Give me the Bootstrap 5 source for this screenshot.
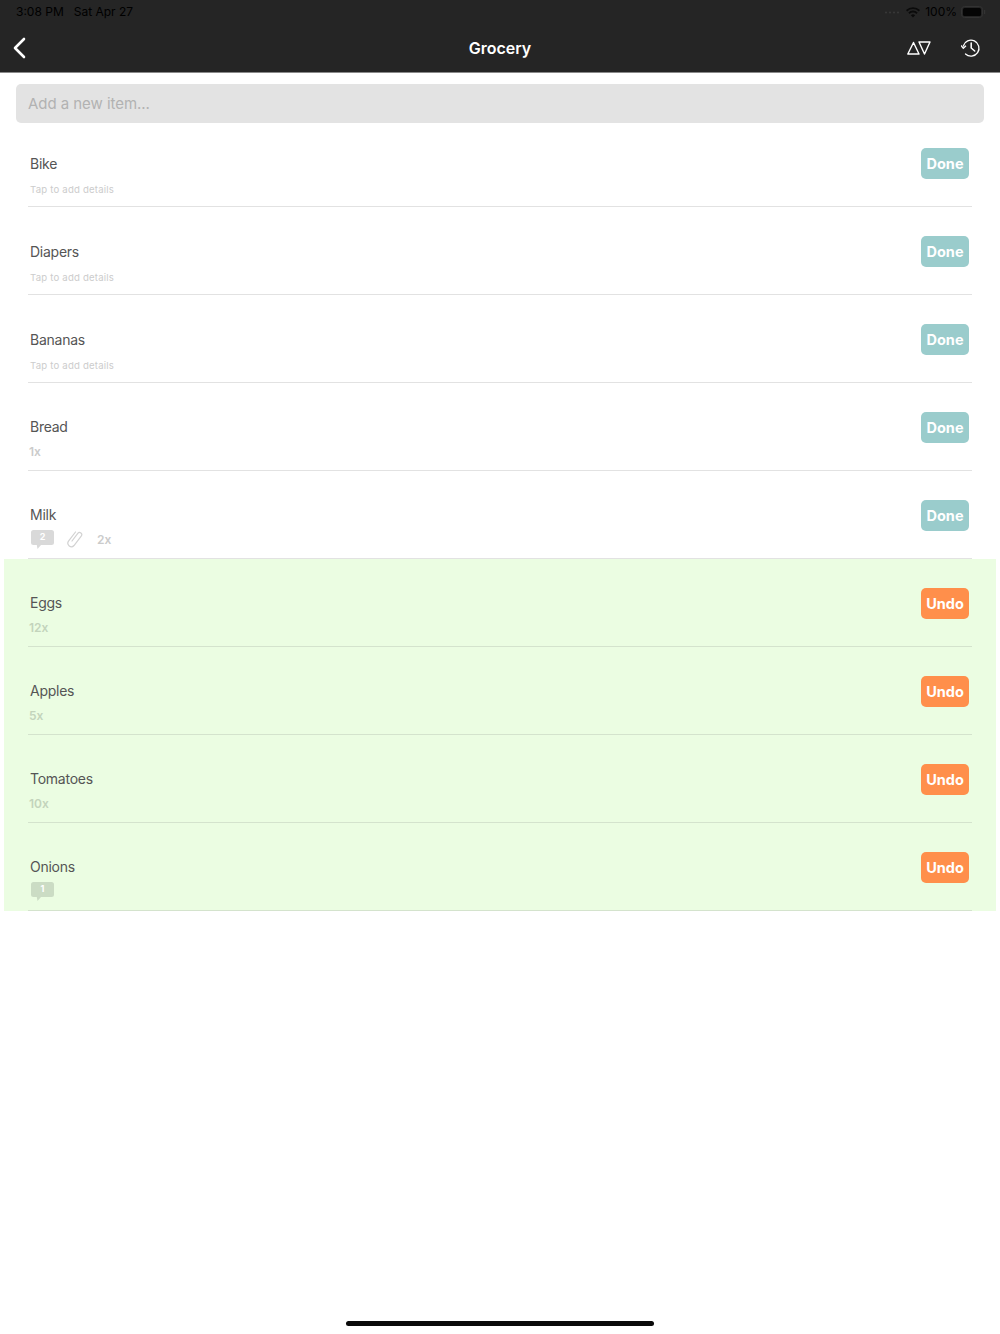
<!DOCTYPE html>
<html lang="en"><head><meta charset="utf-8"><title>Grocery</title>
<link href="https://cdn.jsdelivr.net/npm/bootstrap@5.3.0/dist/css/bootstrap.min.css" rel="stylesheet">
<style>
html,body{height:1334px;overflow:hidden}
body{font-family:Inter,"Liberation Sans",sans-serif;background:#fff;color:#555}
.hdr{height:73px;background:#252525;border-bottom:1px solid #8a8a8a;color:#fff}
.stat{height:24px;padding:0 14px 0 16px;font-size:12px;color:#000}
.navr{height:48px;padding:0 19px 0 12px}
.ttl{font-size:16px;font-weight:600;color:#fff}
.newbox{margin:11px 16px 0;height:39px;background:#e3e3e3;border-radius:5px;padding:0 12px;font-size:15px;line-height:39px;color:#b2b2b2;letter-spacing:-.05px}
.lst{margin-top:-4px}
.grp{margin:0 4px;background:#ebfde2}
.itm{height:88px;border-bottom:1px solid #e2e2e2;position:relative}
.grp .itm{margin-left:24px;margin-right:24px;border-bottom-color:#d4e3cd}
.solo .itm{margin-left:28px;margin-right:28px}
.nm{position:absolute;left:2px;top:36px;font-size:14px;line-height:18px;color:#555;letter-spacing:-.25px}
.solo .itm:nth-child(n+4) .nm,.grp .nm{top:35px}
.tip{position:absolute;left:2px;top:64px;font-size:9.6px;line-height:13px;color:#ccc;letter-spacing:.2px}
.qty{position:absolute;left:1px;top:61px;font-size:12px;font-weight:600;line-height:15px;color:#cbcbcb}
.grp .qty{color:#c3d4bc}
.act{position:absolute;left:893px;top:29px;width:48px;height:31px;border-radius:5px;color:#fff;font-size:14.500px;font-weight:700;line-height:31px;text-align:center}
.ad{background:#9acccc}
.au{background:#ff8f4b}
.bub{position:absolute;left:2px;top:58px;width:25px;height:24px}
.clip{position:absolute;left:38px;top:58px;width:18px;height:20px}
.q2{left:69px}
.hbar{position:absolute;left:346px;top:1321px;width:308px;height:5px;border-radius:3px;background:#0a0a0a}
.gp5{margin-left:5px}
.gp4{margin-left:4px}
</style></head><body>
<div class="hdr">
<div class="stat d-flex align-items-center justify-content-between">
<div class="d-flex" style="column-gap:10px"><span>3:08 PM</span><span>Sat Apr 27</span></div>
<div class="d-flex align-items-center">
<svg width="18" height="4" viewBox="0 0 18 4" class="me-1"><g fill="#3a3a3a"><circle cx="2" cy="2.500" r="1"/><circle cx="6" cy="2.500" r="1"/><circle cx="10" cy="2.500" r="1"/><circle cx="14" cy="2.500" r="1"/></g></svg>
<svg width="14" height="11" viewBox="0 0 14 11"><path d="M7 10.500 4.900 8.200a3 3 0 0 1 4.200 0zM3.600 6.900 2.300 5.500a6.700 6.700 0 0 1 9.400 0l-1.300 1.400a4.800 4.800 0 0 0-6.800 0zM1.200 4.400 0 3a10 10 0 0 1 14 0l-1.200 1.400a8.200 8.200 0 0 0-11.600 0z" fill="#0b0b0b"/></svg>
<span class="gp5">100%</span>
<svg width="25" height="12" viewBox="0 0 25 12" class="gp4"><rect x=".5" y=".5" width="21" height="11" rx="3" fill="none" stroke="#333"/><rect x="2" y="2" width="18" height="8" rx="1.500" fill="#050505"/><rect x="23" y="4" width="1.200" height="4" fill="#333"/></svg>
</div></div>
<div class="navr d-flex align-items-center justify-content-between position-relative">
<svg width="14" height="22" viewBox="0 0 14 22"><path d="M12 2 3 11l9 9" fill="none" stroke="#fff" stroke-width="2.600" stroke-linecap="round" stroke-linejoin="round"/></svg>
<div class="ttl position-absolute top-50 start-50 translate-middle">Grocery</div>
<div class="d-flex align-items-center" style="gap:30px">
<svg width="24" height="14" viewBox="0 0 24 14"><path d="M.8 13 6.500 1.500 12 13zM12 1h11l-5.500 12z" fill="none" stroke="#fff" stroke-width="1.400" stroke-linejoin="round"/></svg>
<svg width="20" height="20" viewBox="0 0 20 20"><path d="M2.300 8A8 8 0 1 1 4.500 16" fill="none" stroke="#fff" stroke-width="1.300" stroke-linecap="round"/><path d="M0 7.500l2.300 2.800L5 7.800" fill="none" stroke="#fff" stroke-width="1.200"/><path d="M10.200 5v5l3.500 3" fill="none" stroke="#fff" stroke-width="1.500" stroke-linecap="round"/></svg>
</div></div></div>
<div class="newbox">Add a new item...</div>
<div class="lst">
<div class="solo">
<div class="itm"><div class="nm">Bike</div><div class="tip">Tap to add details</div><div class="act ad">Done</div></div>
<div class="itm"><div class="nm">Diapers</div><div class="tip">Tap to add details</div><div class="act ad">Done</div></div>
<div class="itm"><div class="nm">Bananas</div><div class="tip">Tap to add details</div><div class="act ad">Done</div></div>
<div class="itm"><div class="nm">Bread</div><div class="qty">1x</div><div class="act ad">Done</div></div>
<div class="itm"><div class="nm">Milk</div>
<svg class="bub" viewBox="0 0 25 24"><path d="M3.500 1h18a2.500 2.500 0 0 1 2.500 2.500v10a2.500 2.500 0 0 1-2.500 2.500H11l-3.500 4-.7-4H3.500A2.500 2.500 0 0 1 1 13.500v-10A2.500 2.500 0 0 1 3.500 1z" fill="#d9d9d9"/><text x="12.500" y="10.500" text-anchor="middle" font-size="9" font-weight="700" fill="#fff" font-family="Inter,sans-serif">2</text></svg>
<svg class="clip" viewBox="0 0 18 20"><path d="M6 12 11.800 4.300a2.200 2.200 0 0 1 3.400 2.800L8 16.500a3.500 3.500 0 0 1-5.500-4.300L9.500 3" fill="none" stroke="#d2d2d2" stroke-width="1.200" stroke-linecap="round"/></svg>
<div class="qty q2">2x</div><div class="act ad">Done</div></div>
</div>
<div class="grp">
<div class="itm"><div class="nm">Eggs</div><div class="qty">12x</div><div class="act au">Undo</div></div>
<div class="itm"><div class="nm">Apples</div><div class="qty">5x</div><div class="act au">Undo</div></div>
<div class="itm"><div class="nm">Tomatoes</div><div class="qty">10x</div><div class="act au">Undo</div></div>
<div class="itm"><div class="nm">Onions</div>
<svg class="bub" viewBox="0 0 25 24"><path d="M3.500 1h18a2.500 2.500 0 0 1 2.500 2.500v10a2.500 2.500 0 0 1-2.500 2.500H11l-3.500 4-.7-4H3.500A2.500 2.500 0 0 1 1 13.500v-10A2.500 2.500 0 0 1 3.500 1z" fill="#cbdcc4"/><text x="12.500" y="10.500" text-anchor="middle" font-size="9" font-weight="700" fill="#fff" font-family="Inter,sans-serif">1</text></svg>
<div class="act au">Undo</div></div>
</div>
</div>
<div class="hbar"></div>
<script src="https://cdn.jsdelivr.net/npm/bootstrap@5.3.0/dist/js/bootstrap.bundle.min.js"></script>
</body></html>
